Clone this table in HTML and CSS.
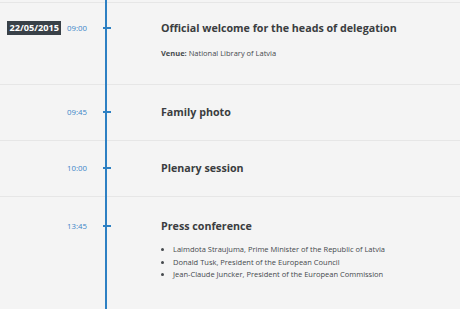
FILE: index.html
```html
<!DOCTYPE html>
<html lang="en">
<head>
	<meta charset="utf-8" />
	<title>Programme</title>
	<meta name="viewport" content="width=device-width,initial-scale=1.0">
	<link rel="stylesheet" href="styles.css">
</head>

<body>
<div class="schedule">

  <div class="item first">
    <div class="when">
      <span class="date">22/05/2015</span>
      <span class="time">09:00</span>
    </div>
    <div class="mark"><span class="tick"></span></div>
    <div class="what">
      <h2>Official welcome for the heads of delegation</h2>
      <p class="venue"><b>Venue:</b> National Library of Latvia</p>
    </div>
  </div>

  <div class="item">
    <div class="when"><span class="time">09:45</span></div>
    <div class="mark"><span class="tick"></span></div>
    <div class="what"><h2>Family photo</h2></div>
  </div>

  <div class="item">
    <div class="when"><span class="time">10:00</span></div>
    <div class="mark"><span class="tick"></span></div>
    <div class="what"><h2>Plenary session</h2></div>
  </div>

  <div class="item last">
    <div class="when"><span class="time">13:45</span></div>
    <div class="mark"><span class="tick"></span></div>
    <div class="what">
      <h2>Press conference</h2>
      <ul class="people">
        <li>Laimdota Straujuma, Prime Minister of the Republic of Latvia</li>
        <li>Donald Tusk, President of the European Council</li>
        <li>Jean-Claude Juncker, President of the European Commission</li>
      </ul>
    </div>
  </div>

</div>
</body>
</html>
```
FILE: styles.css
```css
body {
  margin: 0;
  background: #f4f4f4;
  font-family: "Open Sans", "DejaVu Sans", sans-serif;
  color: #3a3d40;
}

.schedule {
  position: relative;
  padding-top: 2px;
  min-height: 309px;
  box-sizing: border-box;
}

/* the blue line running down the whole programme */
.schedule::before {
  content: "";
  position: absolute;
  left: 105px;
  top: 0;
  bottom: 0;
  width: 2px;
  background: #2d80c3;
}

.item {
  display: grid;
  grid-template-columns: 103px 8px 1fr;
  border-top: 1px solid #e6e6e6;
  padding: 19px 0 20px;
}

.item.first {
  padding: 17px 0 26px;
}

.item.last {
  padding: 21px 0 30px;
}

.when {
  display: flex;
  justify-content: flex-end;
  align-items: center;
  gap: 6px;
  height: 16px;
  padding-right: 16px;
}

.date {
  background: #394148;
  color: #fff;
  font-weight: bold;
  font-size: 9.2px;
  line-height: 14px;
  padding: 0 2px;
}

.time {
  color: #3c85c8;
  font-size: 7.8px;
}

.mark {
  height: 16px;
  display: flex;
  align-items: center;
  position: relative;
  z-index: 1;
}

.tick {
  display: block;
  width: 8px;
  height: 1.5px;
  background: #2d80c3;
}

.what {
  padding-left: 50px;
}

.what h2 {
  margin: 0;
  font-size: 10.7px;
  line-height: 16px;
  font-weight: bold;
  color: #3a3d40;
}

.venue {
  margin: 12px 0 0;
  font-size: 7.5px;
  line-height: 10px;
  color: #45494d;
}

.people {
  margin: 9px 0 0;
  padding-left: 12px;
  font-size: 7.5px;
  line-height: 12.5px;
  color: #45494d;
}
```
